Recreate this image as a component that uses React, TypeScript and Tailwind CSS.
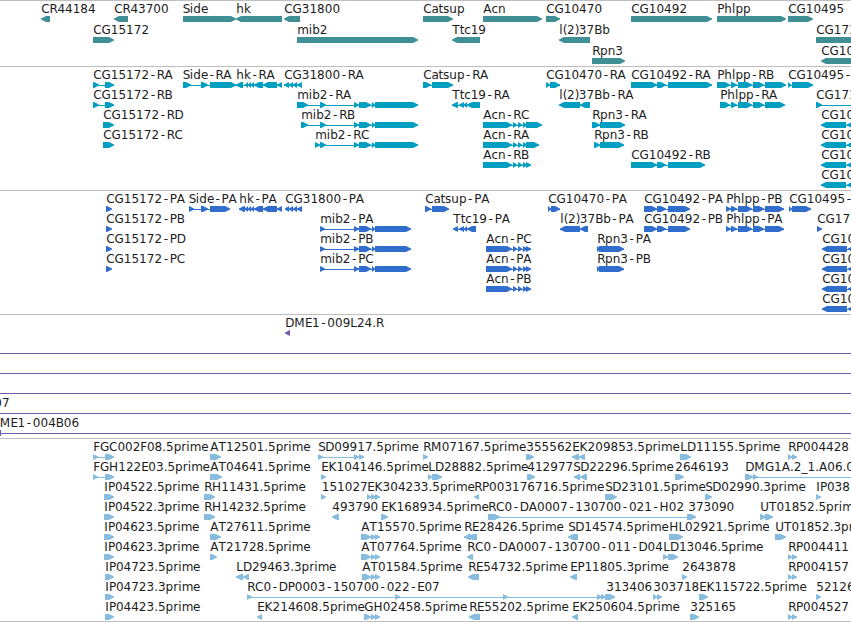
type Feature = {
  label: string;
  x: number;
  row: number;
  segments: number[][];
  reverse?: boolean;
};

type TrackProps = {
  features: Feature[];
  color: string;
  height: number;
  pitch?: number;
  spans?: number[];
};

const WIDTH = 851;
const BAR = 6;

// advance of each character at label size, in pixels
const ADVANCE: Record<string, number> = {
  A: 8.3, B: 8, C: 8.3, D: 9, E: 7.1, F: 6.6, G: 9.2, H: 9.2, I: 3.6, K: 8.2, L: 6.6, M: 10.6,
  P: 7, R: 7.8, S: 7, T: 7.4, U: 8.7, a: 6.9, b: 7.6, c: 6.4, d: 7.6, e: 6.9, h: 7.6,
  i: 3.5, k: 7, l: 3.5, m: 11.4, n: 7.6, p: 7.6, r: 5, s: 6.2, t: 4.6, u: 7.6,
  "-": 7.7, ".": 3.8, "(": 4.2, ")": 4.2, _: 6,
};

const f = (label: string, x: number, row: number, segments: number[][] = []): Feature => ({ label, x, row, segments });
const r = (label: string, x: number, row: number, segments: number[][] = []): Feature => ({
  label,
  x,
  row,
  segments,
  reverse: true,
});

const genes: Feature[] = [
  r("CR44184", 41, 0, [[41, 50]]),
  r("CR43700", 114, 0, [[114, 128]]),
  f("Side", 182.5, 0, [[183, 236]]),
  r("hk", 236, 0, [[236, 282]]),
  r("CG31800", 284, 0, [[284, 300]]),
  f("Catsup", 423, 0, [[423, 453]]),
  f("Acn", 483, 0, [[483, 542]]),
  f("CG10470", 546, 0, [[546, 560]]),
  f("CG10492", 631, 0, [[631, 712]]),
  f("Phlpp", 717, 0, [[717, 786]]),
  f("CG10495", 788, 0, [[788, 813]]),
  f("CG15172", 93, 1, [[93, 114]]),
  f("mib2", 297, 1, [[297, 418]]),
  r("Ttc19", 452, 1, [[452, 480]]),
  r("l(2)37Bb", 559, 1, [[559, 590]]),
  f("CG171", 816, 1, [[816, 870]]),
  f("Rpn3", 592, 2, [[592, 625]]),
  r("CG10", 821, 2, [[821, 880]]),
];

const hkExons = [[245, 248], [248, 251], [251, 254], [254, 263], [263, 277], [277, 282]];
const cg31800Exons = [[289, 293], [293, 297], [297, 302]];
const mib2Exons = [[354, 359], [359, 371], [372, 375]];
const ttc19Exons = [[459, 464], [464, 467]];
const acnExons = [[513, 517], [518, 522], [523, 527]];
const phlppExons = [[731, 737], [738, 752], [753, 764]];
const cg10Exons = [[821, 846], [847, 860]];

const transcripts: Feature[] = [
  f("CG15172-RA", 93, 0, [[93, 99], [105, 114]]),
  f("Side-RA", 182.5, 0, [[183, 191], [201, 208], [210, 236]]),
  r("hk-RA", 236, 0, [[236, 243], ...hkExons]),
  r("CG31800-RA", 284, 0, [[284, 289], ...cg31800Exons]),
  f("Catsup-RA", 423, 0, [[423, 431], [432, 453]]),
  f("CG10470-RA", 546, 0, [[546, 550], [550, 560]]),
  f("CG10492-RA", 631, 0, [[631, 657], [657, 666], [668, 712]]),
  f("Phlpp-RB", 717, 0, [[717, 730], ...phlppExons, [765, 786]]),
  f("CG10495-", 788, 0, [[788, 791], [792, 813]]),
  f("CG15172-RB", 93, 1, [[93, 99], [105, 114]]),
  f("mib2-RA", 297, 1, [[297, 308], [320, 326], ...mib2Exons, [375, 418]]),
  r("Ttc19-RA", 452, 1, [[452, 458], ...ttc19Exons, [467, 480]]),
  r("l(2)37Bb-RA", 559, 1, [[559, 580], [580, 590]]),
  f("Phlpp-RA", 720, 1, [[720, 730], ...phlppExons, [765, 785]]),
  f("CG171", 816, 1, [[816, 822], [860, 870]]),
  f("CG15172-RD", 103, 2, [[103, 114]]),
  f("mib2-RB", 301, 2, [[301, 308], [320, 326], ...mib2Exons, [375, 418]]),
  f("Acn-RC", 483, 2, [[483, 512], ...acnExons, [526, 542]]),
  f("Rpn3-RA", 592, 2, [[592, 600], [600, 625]]),
  r("CG10", 821, 2, cg10Exons),
  f("CG15172-RC", 103, 3, [[103, 114]]),
  f("mib2-RC", 315, 3, [[315, 320], [320, 326], ...mib2Exons, [375, 418]]),
  f("Acn-RA", 483, 3, [[483, 512], ...acnExons, [526, 539]]),
  f("Rpn3-RB", 594, 3, [[594, 600], [600, 624]]),
  r("CG10", 821, 3, cg10Exons),
  f("Acn-RB", 483, 4, [[483, 512], ...acnExons, [526, 531]]),
  f("CG10492-RB", 631, 4, [[631, 657], [657, 666], [668, 705]]),
  r("CG10", 821, 4, cg10Exons),
  r("CG10", 821, 5, cg10Exons),
];

const mib2Coding = [[320, 325], ...mib2Exons, [375, 411]];
const acnCoding = [[486, 512], ...acnExons, [526, 531]];
const phlppCoding = [[726, 731], ...phlppExons, [765, 784]];
const cg10492Coding = [[644, 657], [657, 666], [668, 690]];
const cg10Coding = [[822, 847], [848, 860]];

const proteins: Feature[] = [
  f("CG15172-PA", 106, 0, [[106, 112]]),
  f("Side-PA", 188.5, 0, [[189, 194], [201, 208], [210, 230]]),
  r("hk-PA", 239, 0, [[239, 245], ...hkExons]),
  r("CG31800-PA", 285, 0, [[285, 289], ...cg31800Exons]),
  f("Catsup-PA", 425, 0, [[425, 431], [432, 449]]),
  f("CG10470-PA", 548, 0, [[548, 551], [551, 560]]),
  f("CG10492-PA", 644, 0, cg10492Coding),
  f("Phlpp-PB", 726, 0, phlppCoding),
  f("CG10495-", 789, 0, [[789, 792], [792, 811]]),
  f("CG15172-PB", 106, 1, [[106, 112]]),
  f("mib2-PA", 320, 1, mib2Coding),
  r("Ttc19-PA", 453, 1, [[453, 458], ...ttc19Exons, [467, 476]]),
  r("l(2)37Bb-PA", 560, 1, [[560, 580], [580, 588]]),
  f("CG10492-PB", 644, 1, cg10492Coding),
  f("Phlpp-PA", 726, 1, phlppCoding),
  f("CG17", 817, 1, [[817, 822]]),
  f("CG15172-PD", 106, 2, [[106, 112]]),
  f("mib2-PB", 320, 2, mib2Coding),
  f("Acn-PC", 486, 2, acnCoding),
  f("Rpn3-PA", 597, 2, [[597, 600], [599, 624]]),
  r("CG10", 822, 2, cg10Coding),
  f("CG15172-PC", 106, 3, [[106, 112]]),
  f("mib2-PC", 320, 3, mib2Coding),
  f("Acn-PA", 486, 3, acnCoding),
  f("Rpn3-PB", 597, 3, [[597, 600], [599, 624]]),
  r("CG10", 822, 3, cg10Coding),
  f("Acn-PB", 486, 4, acnCoding),
  r("CG10", 822, 4, cg10Coding),
  r("CG10", 822, 5, cg10Coding),
];

const clones: Feature[] = [
  r("DME1-009L24.R", 285, 0, [[285, 290]]),
  f("07", -6, 4),
  f("DME1-004B06", -9.5, 5),
];

const rpExons = [[788, 792], [792, 797]];
const atTail = [[371, 376], [375, 380]];

const ests: Feature[] = [
  f("FGC002F08.5prime", 93, 0, [[93, 98], [105, 114]]),
  f("AT12501.5prime", 210, 0, [[210, 221]]),
  f("SD09917.5prime", 318, 0, [[318, 323], [354, 359], [359, 364]]),
  f("RM07167.5prime", 423, 0, [[423, 428]]),
  f("355562", 526, 0, [[526, 534]]),
  r("EK209853.5prime", 572, 0, [[572, 579], [579, 585]]),
  f("LD11155.5prime", 680, 0, [[680, 691]]),
  f("RP004428", 788, 0, rpExons),
  f("FGH122E03.5prime", 93, 1, [[93, 98], [105, 114]]),
  f("AT04641.5prime", 210, 1, [[210, 222]]),
  f("EK104146.5prime", 321, 1, [[321, 326]]),
  f("LD28882.5prime", 428, 1, [[428, 432], [432, 442]]),
  f("412977", 527, 1, [[527, 535]]),
  r("SD22296.5prime", 573, 1, [[574, 580], [580, 587]]),
  f("2646193", 675, 1, [[675, 684]]),
  f("DMG1A.2_1.A06.0", 745, 1, [[745, 753], [753, 758], [870, 880]]),
  f("IP04522.5prime", 104, 2, [[104, 114]]),
  f("RH11431.5prime", 204, 2, [[204, 215]]),
  f("151027", 321.5, 2, [[321, 326]]),
  f("EK304233.5prime", 367, 2, [[367, 371], ...atTail]),
  r("RP003176716.5prime", 474, 2, [[474, 479]]),
  f("SD23101.5prime", 605, 2, [[605, 617]]),
  f("SD02990.3prime", 705, 2, [[705, 712]]),
  f("IP038", 816, 2, [[816, 821]]),
  f("IP04522.3prime", 104, 3, [[104, 114]]),
  f("RH14232.5prime", 204, 3, [[204, 215]]),
  r("493790", 332, 3, [[332, 339]]),
  f("EK168934.5prime", 381, 3, [[381, 388]]),
  f("RC0-DA0007-130700-021-H02", 488, 3, [[488, 500], [687, 696]]),
  f("373090", 688, 3),
  f("UT01852.5prime", 760, 3, [[760, 766], [765, 773]]),
  f("IP04623.5prime", 104, 4, [[104, 114]]),
  f("AT27611.5prime", 210, 4, [[210, 221]]),
  f("AT15570.5prime", 361, 4, [[361, 371], ...atTail]),
  r("RE28426.5prime", 464, 4, [[464, 471], [468, 477]]),
  r("SD14574.5prime", 568, 4, [[568, 578]]),
  f("HL02921.5prime", 669, 4, [[669, 683]]),
  f("UT01852.3prime", 775, 4, [[775, 786]]),
  f("IP04623.3prime", 104, 5, [[104, 114]]),
  f("AT21728.5prime", 210, 5, [[210, 217]]),
  f("AT07764.5prime", 361, 5, [[361, 371], ...atTail]),
  r("RC0-DA0007-130700-011-D04", 467, 5, [[467, 473]]),
  f("LD13046.5prime", 663, 5, [[663, 668], [668, 678]]),
  f("RP004411", 788, 5, rpExons),
  f("IP04723.5prime", 105, 6, [[105, 114]]),
  r("LD29463.3prime", 236, 6, [[236, 243], [243, 249]]),
  f("AT01584.5prime", 362, 6, [[362, 371], ...atTail]),
  r("RE54732.5prime", 468, 6, [[468, 479]]),
  r("EP11805.3prime", 570, 6, [[570, 577]]),
  f("2643878", 682, 6, [[682, 687]]),
  f("RP004157", 788, 6, rpExons),
  f("IP04723.3prime", 105, 7, [[105, 114]]),
  f("RC0-DP0003-150700-022-E07", 247, 7, [[247, 252], [395, 400], [503, 508], [597, 602], [601, 606], [605, 615]]),
  f("313406", 606, 7),
  f("303718", 653, 7, [[653, 657], [657, 662]]),
  f("EK115722.5prime", 699, 7, [[699, 708]]),
  f("52126", 816, 7, [[816, 821]]),
  f("IP04423.5prime", 105, 8, [[105, 114]]),
  r("EK214608.5prime", 257, 8, [[257, 262]]),
  f("GH02458.5prime", 364, 8, [[364, 371], ...atTail]),
  r("RE55202.5prime", 469, 8, [[469, 480]]),
  r("EK250604.5prime", 572, 8, [[572, 578]]),
  f("325165", 690, 8, [[690, 699]]),
  f("RP004527", 788, 8, rpExons),
];

function charPositions(label: string, x: number) {
  let pos = x + 0.3;
  return label
    .split("")
    .map((ch) => {
      const at = pos;
      const advance = ADVANCE[ch] ?? 7.65;
      pos += advance;
      // the hyphen glyph is narrow, so it is centred in its cell
      return (ch === "-" ? at + 1.6 : at).toFixed(2);
    })
    .join(" ");
}

function arrow(x0: number, x1: number, y: number, reverse?: boolean) {
  const head = Math.min(5, x1 - x0);
  const mid = y + BAR / 2;
  if (reverse) {
    return `M${x1} ${y}H${x0 + head}L${x0} ${mid - 0.5}V${mid + 0.5}L${x0 + head} ${y + BAR}H${x1}Z`;
  }
  return `M${x0} ${y}H${x1 - head}L${x1} ${mid - 0.5}V${mid + 0.5}L${x1 - head} ${y + BAR}H${x0}Z`;
}

function Track({ features, color, height, pitch = 20, spans = [] }: TrackProps) {
  return (
    <section className="border-t border-[#bebebe]">
      <svg width={WIDTH} height={height} className={`block overflow-hidden ${color}`} fill="currentColor">
        {spans.map((row) => (
          <rect key={row} x={0} y={row * pitch + 18} width={WIDTH} height={1} />
        ))}
        {features.map(({ label, x, row, segments, reverse }, i) => {
          const top = row * pitch + 15;
          const last = segments[segments.length - 1];
          return (
            <g key={i}>
              {segments.length > 1 && (
                <rect x={segments[0][0]} y={top + 3} width={last[1] - segments[0][0]} height={1} />
              )}
              {segments.map(([x0, x1]) => (
                <path key={x0} d={arrow(x0, x1, top, reverse)} />
              ))}
              <text x={charPositions(label, x)} y={top - 3} className="fill-[#1c1c1c]">
                {label}
              </text>
            </g>
          );
        })}
        {spans.length > 0 && <rect x={0} y={115} width={1} height={6} />}
      </svg>
    </section>
  );
}

export default function App() {
  return (
    <main className="flex h-[622px] w-[851px] flex-col overflow-hidden border-b border-[#bebebe] bg-white font-['DejaVu_Sans',sans-serif] text-[12px]">
      <Track features={genes} color="text-[#408f94]" height={65} pitch={21} />
      <Track features={transcripts} color="text-[#009fc1]" height={123} />
      <Track features={proteins} color="text-[#316dcd]" height={123} />
      <Track features={clones} color="text-[#7459a8]" height={123} spans={[1, 2, 3, 4, 5]} />
      <Track features={ests} color="text-[#88bcde]" height={182} />
    </main>
  );
}
